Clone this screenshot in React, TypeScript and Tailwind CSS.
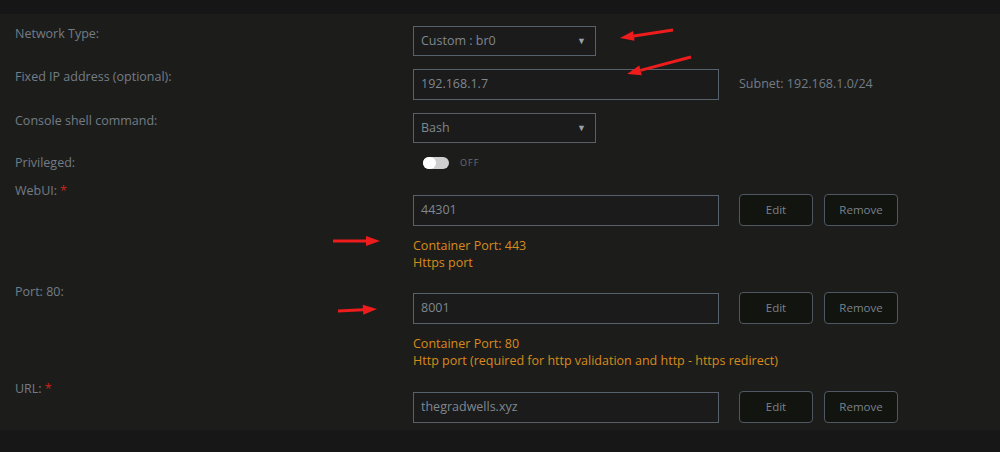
const font = "font-['Open_Sans','Noto_Sans',sans-serif]";

function Label({ text, required }: { text: string; required?: boolean }) {
  return (
    <div className="w-[413px] shrink-0 pl-[15px] text-[12.5px] leading-[16px] text-[#737c86]">
      {text}
      {required && <span className="ml-[3px] text-[#c8241a]">*</span>}
    </div>
  );
}

function Select({ value }: { value: string }) {
  return (
    <div className="flex h-[30px] w-[183px] items-center justify-between border border-[#57616b] bg-[#1a1b1a] pl-[7px] pr-[9px] text-[12.5px] text-[#7f8790]">
      <span>{value}</span>
      <span className="text-[9px] text-[#9aa1a8]">▼</span>
    </div>
  );
}

function TextBox({ value }: { value: string }) {
  return (
    <div className="flex h-[31px] w-[306px] items-center border border-[#57616b] bg-[#1a1b1a] pl-[7px] text-[12.5px] text-[#7f8790]">
      {value}
    </div>
  );
}

function Btn({ text }: { text: string }) {
  return (
    <button className="h-[32px] w-[74px] rounded-[4px] border border-[#4f5862] bg-[#121410] text-[11.5px] text-[#7a828b]">
      {text}
    </button>
  );
}

function PortRow({ value }: { value: string }) {
  return (
    <div className="flex items-center">
      <TextBox value={value} />
      <div className="ml-[20px] flex gap-[11px]">
        <Btn text="Edit" />
        <Btn text="Remove" />
      </div>
    </div>
  );
}

function Note({ lines }: { lines: string[] }) {
  return (
    <div className="mt-[11px] text-[12.5px] leading-[17px] text-[#d88a1c]">
      {lines.map((l) => (
        <div key={l}>{l}</div>
      ))}
    </div>
  );
}

function Arrow({ x1, y1, x2, y2 }: { x1: number; y1: number; x2: number; y2: number }) {
  const a = Math.atan2(y2 - y1, x2 - x1);
  const len = 14;
  const w = 5;
  const bx = x2 - len * Math.cos(a);
  const by = y2 - len * Math.sin(a);
  const px = -Math.sin(a) * w;
  const py = Math.cos(a) * w;
  return (
    <g>
      <line x1={x1} y1={y1} x2={bx} y2={by} stroke="#ee1c1c" strokeWidth={3} />
      <polygon points={`${x2},${y2} ${bx + px},${by + py} ${bx - px},${by - py}`} fill="#ee1c1c" />
    </g>
  );
}

export default function App() {
  return (
    <div className={`relative h-[452px] w-[1000px] overflow-hidden bg-[#1c1d1b] ${font}`}>
      <div className="h-[14px] bg-[#151615]" />
      <div className="pt-[12px]">
        <div className="flex">
          <Label text="Network Type:" />
          <Select value="Custom : br0" />
        </div>
        <div className="mt-[13px] flex">
          <Label text="Fixed IP address (optional):" />
          <div className="flex items-center">
            <TextBox value="192.168.1.7" />
            <span className="ml-[20px] text-[12.5px] text-[#737c86]">Subnet: 192.168.1.0/24</span>
          </div>
        </div>
        <div className="mt-[13px] flex">
          <Label text="Console shell command:" />
          <Select value="Bash" />
        </div>
        <div className="mt-[12px] flex">
          <Label text="Privileged:" />
          <div className="flex items-center pl-[10px]">
            <div className="flex h-[12px] w-[26px] items-center rounded-full bg-[#cfcfcf]">
              <div className="h-[12px] w-[13px] rounded-full bg-white" />
            </div>
            <span className="ml-[11px] text-[9px] tracking-[1px] text-[#666e76]">OFF</span>
          </div>
        </div>
        <div className="mt-[12px] flex">
          <Label text="WebUI:" required />
          <div className="pt-[11px]">
            <PortRow value="44301" />
            <Note lines={["Container Port: 443", "Https port"]} />
          </div>
        </div>
        <div className="mt-[13px] flex">
          <Label text="Port: 80:" />
          <div className="pt-[8px]">
            <PortRow value="8001" />
            <Note lines={["Container Port: 80", "Http port (required for http validation and http - https redirect)"]} />
          </div>
        </div>
        <div className="mt-[12px] flex">
          <Label text="URL:" required />
          <div className="pt-[10px]">
            <PortRow value="thegradwells.xyz" />
          </div>
        </div>
      </div>
      <div className="absolute bottom-0 left-0 h-[22px] w-full bg-[#161716]" />
      <svg className="pointer-events-none absolute left-0 top-0" width={1000} height={452}>
        <Arrow x1={673} y1={30} x2={620} y2={38} />
        <Arrow x1={691} y1={57} x2={627} y2={74} />
        <Arrow x1={333} y1={241} x2={380} y2={241} />
        <Arrow x1={338} y1={311} x2={377} y2={309} />
      </svg>
    </div>
  );
}
